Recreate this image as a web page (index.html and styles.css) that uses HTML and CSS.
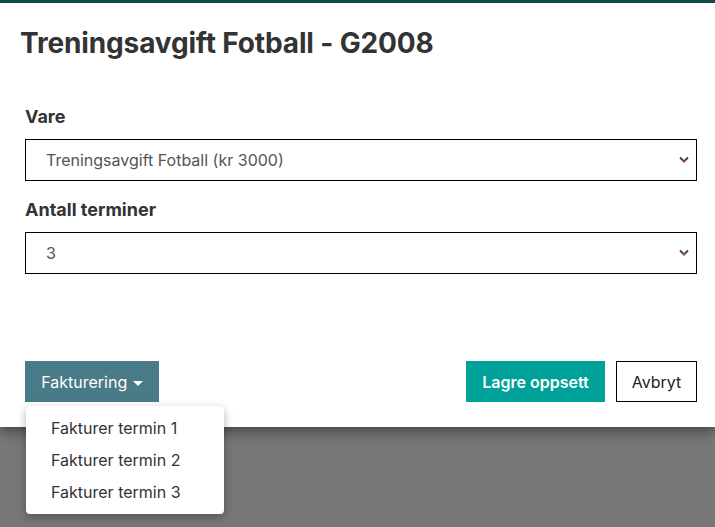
FILE: index.html
```html
<!DOCTYPE html>
<html>
<head>
    <title>Treningsavgift Fotball - G2008</title>
    <link rel="stylesheet" href="styles.css">
</head>
<body>
<div class="modal">
    <header class="modal-header">
        <h2>Treningsavgift Fotball - G2008</h2>
    </header>

    <main class="modal-body">
        <div class="form-group">
            <label for="vareSelect">Vare</label>
            <div class="select">
                <span id="vareSelect">Treningsavgift Fotball (kr 3000)</span>
                <svg class="select-arrow" width="10" height="8" viewBox="0 0 10 8">
                    <path d="M1 1.5 L5 5.5 L9 1.5" fill="none" stroke="#444" stroke-width="2"/>
                    <path d="M3 4 L5 6 L7 4" fill="none" stroke="#d84a4a" stroke-width="1"/>
                </svg>
            </div>
        </div>
        <div class="form-group">
            <label for="terminSelect">Antall terminer</label>
            <div class="select">
                <span id="terminSelect">3</span>
                <svg class="select-arrow" width="10" height="8" viewBox="0 0 10 8">
                    <path d="M1 1.5 L5 5.5 L9 1.5" fill="none" stroke="#444" stroke-width="2"/>
                    <path d="M3 4 L5 6 L7 4" fill="none" stroke="#d84a4a" stroke-width="1"/>
                </svg>
            </div>
        </div>
    </main>

    <footer class="modal-footer">
        <div class="dropdown">
            <button class="btn btn-billing">Fakturering <span class="caret"></span></button>
            <ul class="dropdown-menu">
                <li>Fakturer termin 1</li>
                <li>Fakturer termin 2</li>
                <li>Fakturer termin 3</li>
            </ul>
        </div>
        <div class="footer-actions">
            <button class="btn btn-save">Lagre oppsett</button>
            <button class="btn btn-cancel">Avbryt</button>
        </div>
    </footer>
</div>
</body>
</html>
```

FILE: styles.css
```css
:root {
    --overlay-bg: #777777;
    --top-border: #0f4a47;
    --text-color: #333333;
    --muted-text: #555555;
    --billing-bg: #487a87;
    --save-bg: #00a199;
}

body {
    margin: 0;
    background-color: var(--overlay-bg);
    font-family: "Inter", "Lato", sans-serif;
    color: var(--text-color);
    height: 527px;
    overflow: hidden;
}

.modal {
    background-color: #ffffff;
    border-top: 3px solid var(--top-border);
    height: 424px;
    box-shadow: 0 4px 12px rgba(0, 0, 0, 0.45);
    display: flex;
    flex-direction: column;
}

.modal-header h2 {
    margin: 0;
    padding: 23px 20px 0 20px;
    font-size: 28px;
    font-weight: 700;
    line-height: 34px;
    letter-spacing: -0.15px;
    color: #333333;
}

.modal-body {
    padding: 46px 18px 0 25px;
}

.form-group {
    margin-bottom: 18px;
}

label {
    display: block;
    font-size: 18px;
    font-weight: 700;
    line-height: 22px;
    margin-bottom: 11px;
}

.select {
    height: 40px;
    border: 1px solid #000000;
    display: flex;
    align-items: center;
    justify-content: space-between;
    padding: 0 7px 0 20px;
    font-size: 16px;
    color: var(--muted-text);
}

.select-arrow {
    display: block;
}

.modal-footer {
    margin-top: auto;
    padding: 0 18px 25px 25px;
    display: flex;
    justify-content: space-between;
    align-items: flex-start;
}

.footer-actions {
    display: flex;
    gap: 11px;
}

.btn {
    height: 41px;
    font-family: inherit;
    font-size: 16px;
    border: none;
    border-radius: 0;
    cursor: pointer;
    padding: 0 14px;
}

.btn-billing {
    background-color: var(--billing-bg);
    color: #ffffff;
    width: 134px;
}

.caret {
    display: inline-block;
    width: 0;
    height: 0;
    margin-left: 1px;
    vertical-align: middle;
    border-top: 5px solid #ffffff;
    border-left: 5px solid transparent;
    border-right: 5px solid transparent;
}

.btn-save {
    background-color: var(--save-bg);
    color: #ffffff;
    font-weight: 600;
    width: 139px;
}

.btn-cancel {
    background-color: #ffffff;
    color: #222222;
    border: 1px solid #000000;
    width: 81px;
}

.dropdown {
    position: relative;
}

.dropdown-menu {
    position: absolute;
    top: 45px;
    left: 1px;
    width: 198px;
    margin: 0;
    padding: 6px 0;
    list-style: none;
    background-color: #ffffff;
    border-radius: 4px;
    box-shadow: 0 3px 10px rgba(0, 0, 0, 0.3);
    z-index: 10;
}

.dropdown-menu li {
    font-size: 16px;
    line-height: 32px;
    padding: 0 25px;
    color: var(--text-color);
}
```
